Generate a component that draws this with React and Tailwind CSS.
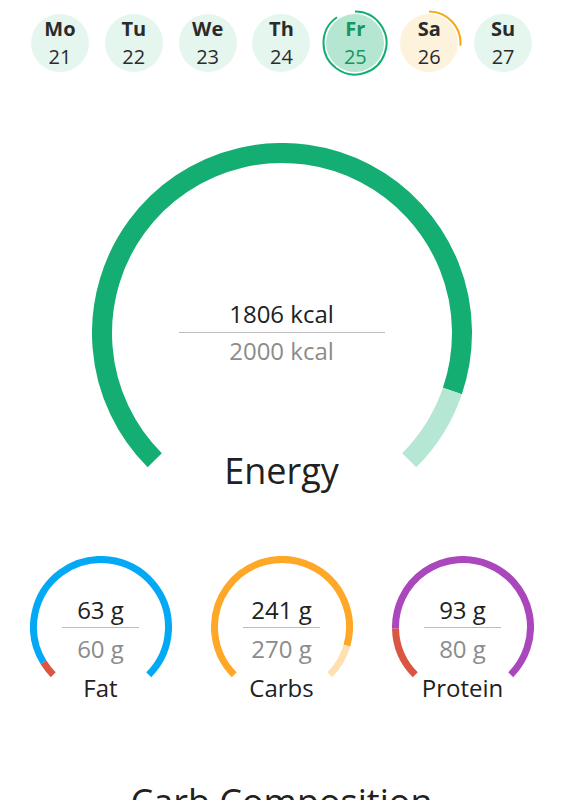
import React from "react";

const polar = (cx, cy, r, a) => {
  const rad = (a * Math.PI) / 180;
  return [cx + r * Math.sin(rad), cy - r * Math.cos(rad)];
};
const arc = (cx, cy, r, a0, a1) => {
  const [x0, y0] = polar(cx, cy, r, a0);
  const [x1, y1] = polar(cx, cy, r, a1);
  const large = a1 - a0 > 180 ? 1 : 0;
  return `M ${x0} ${y0} A ${r} ${r} 0 ${large} 1 ${x1} ${y1}`;
};

const START = -135;
const SPAN = 270;
const at = (f) => START + SPAN * f;

function GaugeSvg({ size, r, stroke, segments }) {
  const c = size / 2;
  return (
    <svg width={size} height={size} viewBox={`0 0 ${size} ${size}`} className="block">
      {segments.map((s, i) => (
        <path
          key={i}
          d={arc(c, c, r, at(s.from), at(s.to))}
          fill="none"
          stroke={s.color}
          strokeWidth={stroke}
          strokeLinecap="butt"
        />
      ))}
    </svg>
  );
}

const days = [
  { d: "Mo", n: "21" },
  { d: "Tu", n: "22" },
  { d: "We", n: "23" },
  { d: "Th", n: "24" },
  { d: "Fr", n: "25", active: true },
  { d: "Sa", n: "26", partial: true },
  { d: "Su", n: "27" },
];

function Day({ day }) {
  let bg = "bg-[#e5f6ef]";
  let labelColor = "text-[#2b2b2b]";
  if (day.active) {
    bg = "bg-[#b5e6d2]";
    labelColor = "text-[#16965f]";
  } else if (day.partial) {
    bg = "bg-[#fdf3dc]";
  }
  return (
    <div className="flex justify-center">
      <div className={`relative flex h-[58px] w-[58px] flex-col items-center justify-center rounded-full ${bg} ${labelColor}`}>
        <span className="text-[20px] font-bold leading-[28px]">{day.d}</span>
        <span className="text-[20px] leading-[28px]">{day.n}</span>
        {day.active && (
          <svg width="66" height="66" viewBox="0 0 66 66" className="absolute left-[-4px] top-[-4px]">
            <path d={arc(33, 33, 31.5, 0, 325)} fill="none" stroke="#14ad72" strokeWidth="2" />
          </svg>
        )}
        {day.partial && (
          <svg width="66" height="66" viewBox="0 0 66 66" className="absolute left-[-4px] top-[-4px]">
            <path d={arc(33, 33, 31.5, 0, 95)} fill="none" stroke="#f5a90c" strokeWidth="2" />
          </svg>
        )}
      </div>
    </div>
  );
}

function Macro({ value, goal, label, segments }) {
  return (
    <div className="flex justify-center">
      <div className="relative h-[142px] w-[142px]">
        <GaugeSvg size={142} r={67.5} stroke={7} segments={segments} />
        <div className="absolute inset-x-0 top-[38px] flex flex-col items-center">
          <span className="text-[24px] leading-[32px] text-[#212121]">{value}</span>
          <div className="mt-[1px] h-px w-[77px] bg-[#bdbdbd]" />
          <span className="mt-[5px] text-[24px] leading-[32px] text-[#8c8c8c]">{goal}</span>
        </div>
        <div className="absolute inset-x-[-20px] top-[116px] text-center text-[24px] leading-[32px] text-[#212121]">
          {label}
        </div>
      </div>
    </div>
  );
}

export default function App() {
  return (
    <div className="min-h-[800px] w-[563px] overflow-hidden bg-white" style={{ fontFamily: '"Open Sans", "Noto Sans", sans-serif', height: 800 }}>
      <div className="grid grid-cols-7 px-[23px] pt-[14px]">
        {days.map((d) => (
          <Day key={d.d} day={d} />
        ))}
      </div>

      <div className="mt-[71px] flex justify-center">
        <div className="relative h-[380px] w-[380px]">
          <GaugeSvg
            size={380}
            r={180}
            stroke={20}
            segments={[
              { from: 0, to: 0.903, color: "#14ad72" },
              { from: 0.903, to: 1, color: "#b6e6d4" },
            ]}
          />
          <div className="absolute inset-x-0 top-[155px] flex flex-col items-center">
            <span className="text-[24px] leading-[32px] text-[#212121]">1806 kcal</span>
            <div className="mt-[2px] h-px w-[206px] bg-[#bdbdbd]" />
            <span className="mt-[2px] text-[24px] leading-[32px] text-[#8c8c8c]">2000 kcal</span>
          </div>
          <div className="absolute inset-x-0 top-[304px] text-center text-[36px] leading-[48px] text-[#212121]">
            Energy
          </div>
        </div>
      </div>

      <div className="mt-[33px] grid grid-cols-3 px-[10px]">
        <Macro
          value="63 g"
          goal="60 g"
          label="Fat"
          segments={[
            { from: 0, to: 0.05, color: "#dc5442" },
            { from: 0.05, to: 1, color: "#03a9f4" },
          ]}
        />
        <Macro
          value="241 g"
          goal="270 g"
          label="Carbs"
          segments={[
            { from: 0, to: 0.8926, color: "#ffa726" },
            { from: 0.8926, to: 1, color: "#ffe0b2" },
          ]}
        />
        <Macro
          value="93 g"
          goal="80 g"
          label="Protein"
          segments={[
            { from: 0, to: 0.1625, color: "#dc5442" },
            { from: 0.1625, to: 1, color: "#ab47bc" },
          ]}
        />
      </div>

      <div className="mt-[80px] text-center text-[36px] leading-[48px] text-[#212121]">Carb Composition</div>
    </div>
  );
}
